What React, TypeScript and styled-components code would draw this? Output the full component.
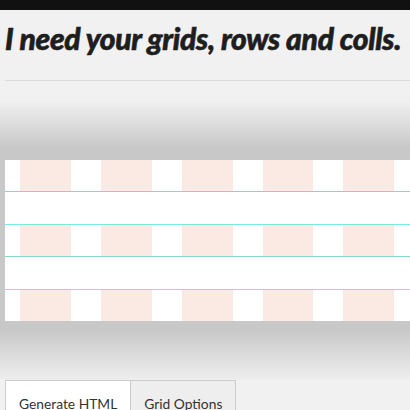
import React from "react";
import styled, { createGlobalStyle } from "styled-components";

const Global = createGlobalStyle`
  html, body { margin: 0; padding: 0; overflow: hidden; }
  body { background: #f1f1f1; font-family: Lato, "Open Sans", sans-serif; color: #333; }
`;

const TopBar = styled.div`
  height: 10px;
  background: #111;
`;

const Header = styled.header`
  padding: 10px 0 0 5px;
`;

const Title = styled.h1`
  margin: 0;
  font-family: Lato, sans-serif;
  font-style: italic;
  font-weight: 900;
  font-size: 30px;
  line-height: 36px;
  color: #1e1e1e;
  white-space: nowrap;
  letter-spacing: -0.3px;
  -webkit-text-stroke: 0.6px #1e1e1e;
`;

const Rule = styled.hr`
  margin: 24px 0 19px;
  border: 0;
  border-top: 1px solid #dcdcdc;
  height: 0;
`;

const Band = styled.section`
  padding: 60px 0 59px 5px;
  background: linear-gradient(
    to bottom,
    #f1f1f1 0,
    #c8c8c8 48px,
    #c8c8c8 calc(100% - 50px),
    #eeeeee 100%
  );
`;

const Grid = styled.div`
  width: 970px;
  background: #fff;
  display: flex;
  flex-direction: column;
`;

const Row = styled.div<{ $top?: boolean; $bottom?: boolean }>`
  display: grid;
  grid-template-columns: repeat(12, 1fr);
  height: 31px;
  border-top: ${(p) => (p.$top ? "1px solid #78ebe0" : "0")};
  border-bottom: ${(p) => (p.$bottom ? "1px solid #86d6ca" : "0")};
`;

const Spacer = styled.div`
  height: 32px;
  background: #fff;
`;

const Col = styled.div`
  padding: 0 15px;
  display: flex;
`;

const Cell = styled.div`
  flex: 1;
  background: #fbe9e4;
`;

const Tabs = styled.nav`
  display: flex;
  padding-left: 5px;
`;

const Tab = styled.div<{ $active?: boolean }>`
  border: 1px solid #cccccc;
  border-left-width: ${(p) => (p.$active ? "1px" : "0")};
  border-bottom: 0;
  background: ${(p) => (p.$active ? "#fff" : "#eeeeee")};
  padding: 13px 13px 6px 13px;
  font-size: 13.8px;
  line-height: 20px;
  color: #333;
  white-space: nowrap;
`;

const GridRow = ({ top, bottom }: { top?: boolean; bottom?: boolean }) => (
  <Row $top={top} $bottom={bottom}>
    {Array.from({ length: 12 }).map((_, i) => (
      <Col key={i}>
        <Cell />
      </Col>
    ))}
  </Row>
);

export default function App() {
  return (
    <>
      <Global />
      <TopBar />
      <Header>
        <Title>I need your grids, rows and colls.</Title>
        <Rule />
      </Header>
      <Band>
        <Grid>
          <GridRow bottom />
          <Spacer />
          <GridRow top bottom />
          <Spacer />
          <GridRow top />
        </Grid>
      </Band>
      <Tabs>
        <Tab $active>Generate HTML</Tab>
        <Tab>Grid Options</Tab>
      </Tabs>
    </>
  );
}
